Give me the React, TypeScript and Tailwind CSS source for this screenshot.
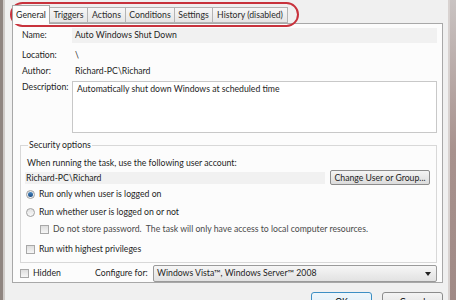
import React from 'react';

const font = { fontFamily: 'Lato, "Noto Sans", sans-serif' };

function Tab({ label, w, active }: { label: string; w: string; active?: boolean }) {
  return (
    <div
      className={
        (active
          ? 'relative z-10 -mb-px flex h-[19px] items-center justify-center border border-b-0 border-[#a8a8a8] bg-[#fcfcfc] pt-[1px] text-[#1e1e1e] '
          : 'mt-[2px] flex h-[16px] items-center justify-center border border-l-0 border-[#b4b4b4] bg-gradient-to-b from-[#f7f7f7] to-[#e6e6e6] pt-[1px] text-[#2a2a2a] ') + w
      }
    >
      {label}
    </div>
  );
}

function Radio({ checked }: { checked?: boolean }) {
  return (
    <span className="flex h-[9px] w-[9px] shrink-0 items-center justify-center rounded-full border border-[#a0a0a0] bg-gradient-to-b from-[#e2e2e2] to-[#fafafa]">
      {checked && <span className="h-[5px] w-[5px] rounded-full bg-gradient-to-b from-[#4a8ac4] to-[#1a4a80]" />}
    </span>
  );
}

function Check() {
  return <span className="block h-[9px] w-[9px] shrink-0 border border-[#a8a8a8] bg-gradient-to-b from-[#dedede] to-[#f6f6f6]" />;
}

export default function App() {
  return (
    <div className="flex h-[300px] w-[456px] overflow-hidden whitespace-nowrap text-[8.7px] leading-none" style={font}>
      <div className="w-[3px] bg-[#8f8580]" />
      <div className="w-[2px] bg-[#cfcbc8]" />
      <div className="relative flex flex-1 flex-col bg-[#f0f0f0] pl-[7px] pr-[5px] pt-[5px]">
        {/* tabs */}
        <div className="flex">
          <Tab label="General" w="w-[38px]" active />
          <Tab label="Triggers" w="w-[38px]" />
          <Tab label="Actions" w="w-[38px]" />
          <Tab label="Conditions" w="w-[49px]" />
          <Tab label="Settings" w="w-[38px]" />
          <Tab label="History (disabled)" w="w-[75px]" />
        </div>
        {/* red highlight */}
        <div className="pointer-events-none absolute left-[5px] top-[2px] h-[25px] w-[289px] rounded-[14px] border-2 border-[#c8323c]" />

        <div className="flex h-[264px] flex-col border border-[#a8a8a8] bg-[#fcfcfc] pl-[9px] pr-[5px] text-[#1e1e1e]">
          <div className="mt-[4px] flex h-[15px] items-center">
            <span className="w-[50px]">Name:</span>
            <div className="flex h-[15px] flex-1 items-center bg-[#f1f1f1] pl-[3px]">Auto Windows Shut Down</div>
          </div>
          <div className="mt-[4px] flex h-[16px] items-center">
            <span className="w-[53px]">Location:</span>
            <span>\</span>
          </div>
          <div className="flex h-[16px] items-center">
            <span className="w-[53px]">Author:</span>
            <span>Richard-PC\Richard</span>
          </div>
          <div className="mt-[2px] flex">
            <span className="w-[50px] pt-[2px]">Description:</span>
            <div className="h-[52px] flex-1 border border-[#c8c8c8] bg-white pl-[4px] pt-[3px]">
              Automatically shut down Windows at scheduled time
            </div>
          </div>

          <fieldset className="-ml-[2px] mt-[8px] h-[122px] border border-[#d8d8d8] pl-[5px] pr-[6px]">
            <legend className="ml-[2px] px-[1px]">Security options</legend>
            <div className="mt-[9px] pl-[1px]">When running the task, use the following user account:</div>
            <div className="mt-[3px] flex h-[15px] items-center">
              <div className="-ml-[1px] flex h-[12px] w-[300px] items-center bg-[#f1f1f1] pl-[1px]">Richard-PC\Richard</div>
              <div className="ml-auto flex h-[15px] w-[100px] items-center justify-center rounded-[2px] border border-[#8c8c8c] bg-gradient-to-b from-[#f4f4f4] to-[#dcdcdc]">
                Change User or Group...
              </div>
            </div>
            <div className="mt-[3px] flex h-[12px] items-center gap-[4px]">
              <Radio checked />
              <span>Run only when user is logged on</span>
            </div>
            <div className="mt-[6px] flex h-[12px] items-center gap-[4px]">
              <Radio />
              <span>Run whether user is logged on or not</span>
            </div>
            <div className="mt-[5px] flex h-[12px] items-center gap-[4px] pl-[14px] text-[#4a4a4a]">
              <Check />
              <span>Do not store password.&nbsp; The task will only have access to local computer resources.</span>
            </div>
            <div className="mt-[8px] flex h-[12px] items-center gap-[4px]">
              <Check />
              <span>Run with highest privileges</span>
            </div>
          </fieldset>

          <div className="-ml-[2px] mt-[2px] flex h-[17px] items-center">
            <Check />
            <span className="ml-[4px] w-[62px]">Hidden</span>
            <span className="w-[58px]">Configure for:</span>
            <div className="flex h-[17px] flex-1 items-center justify-between rounded-[2px] border border-[#9a9a9a] bg-gradient-to-b from-[#f6f6f6] to-[#e2e2e2] pl-[3px] pr-[5px]">
              <span>Windows Vista™, Windows Server™ 2008</span>
              <svg width="6" height="4" viewBox="0 0 6 4">
                <path d="M0 0h6L3 4z" fill="#222" />
              </svg>
            </div>
          </div>
        </div>

        <div className="mt-[9px] flex justify-end gap-[10px]">
          <div className="flex h-[22px] w-[61px] justify-center rounded-[3px] border border-[#3c8fc4] bg-gradient-to-b from-[#eef6fb] to-[#d9ebf6] pt-[5px]">OK</div>
          <div className="flex h-[22px] w-[61px] justify-center rounded-[3px] border border-[#8c8c8c] bg-gradient-to-b from-[#f4f4f4] to-[#dcdcdc] pt-[5px]">Cancel</div>
        </div>
      </div>
      <div className="w-[2px] bg-[#d8d2d0]" />
      <div className="w-[6px] bg-gradient-to-b from-[#c9c3c2] via-[#a8928e] to-[#a08a86]" />
    </div>
  );
}
